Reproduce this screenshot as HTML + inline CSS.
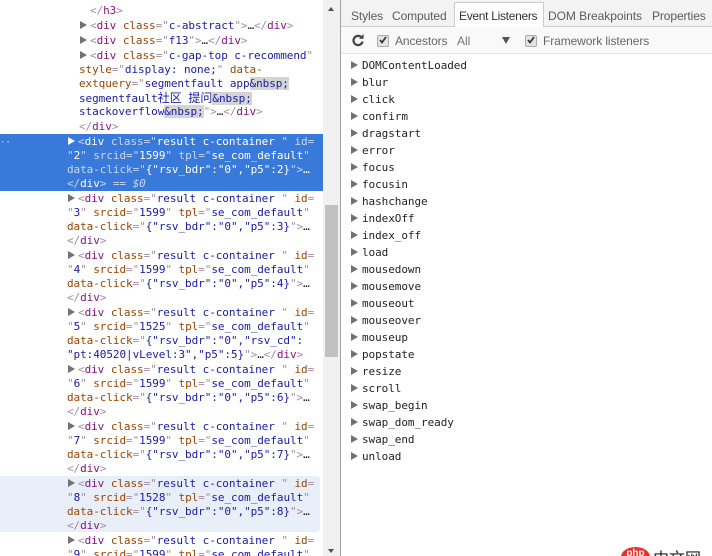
<!DOCTYPE html>
<html><head><meta charset="utf-8">
<style>
html,body{margin:0;padding:0;background:#fff;width:712px;height:556px;overflow:hidden}
#r{position:relative;width:712px;height:556px;overflow:hidden}
.a{position:absolute}
.l{position:absolute;margin-top:1px;white-space:pre;font:11px/14px "DejaVu Sans Mono",monospace;letter-spacing:-.065px;color:#222;height:14px}
.t{color:#881280}.b{color:#a58aa3}.n{color:#994500}.v{color:#1a1aa6}.g{background:#d4d4d4}
.c{font:12px/14px "WenQuanYi Zen Hei","Noto Sans CJK SC",sans-serif;letter-spacing:0;word-spacing:4px}
.s,.s span{color:#fff}.s .b,.s .n{color:#c9d8f2}
.tri{position:absolute;margin-top:1px;width:0;height:0;border-left:7px solid #727272;border-top:4px solid transparent;border-bottom:4px solid transparent}
.tab{position:absolute;top:8px;font:12px/16px "Liberation Sans",sans-serif;color:#5a5a5a;white-space:pre}
.ev{position:absolute;left:362px;margin-top:1px;white-space:pre;font:11px/14px "DejaVu Sans Mono",monospace;letter-spacing:-.065px;color:#222}
.ck{position:absolute;width:10px;height:10px;background:#e4e4e4;border:1px solid #aaa;border-radius:2px}
</style></head><body><div id="r">

<div class="a" style="left:0;top:134px;width:323px;height:57px;background:#3879d9"></div>
<div class="a" style="left:0;top:476px;width:320px;height:56px;background:#e8eff9;border-radius:0 4px 4px 0"></div>

<div class="l" style="left:90px;top:3px"><span class="b">&lt;/</span><span class="t">h3</span><span class="b">&gt;</span></div>
<div class="tri" style="left:80px;top:20px"></div>
<div class="l" style="left:90px;top:18px"><span class="b">&lt;</span><span class="t">div</span> <span class="n">class</span><span class="b">="</span><span class="v">c-abstract</span><span class="b">"&gt;</span>…<span class="b">&lt;/</span><span class="t">div</span><span class="b">&gt;</span></div>
<div class="tri" style="left:80px;top:35px"></div>
<div class="l" style="left:90px;top:33px"><span class="b">&lt;</span><span class="t">div</span> <span class="n">class</span><span class="b">="</span><span class="v">f13</span><span class="b">"&gt;</span>…<span class="b">&lt;/</span><span class="t">div</span><span class="b">&gt;</span></div>
<div class="tri" style="left:80px;top:50px"></div>
<div class="l" style="left:90px;top:48px"><span class="b">&lt;</span><span class="t">div</span> <span class="n">class</span><span class="b">="</span><span class="v">c-gap-top c-recommend</span><span class="b">"</span></div>
<div class="l" style="left:79px;top:62px"><span class="n">style</span><span class="b">="</span><span class="v">display: none;</span><span class="b">"</span> <span class="n">data-</span></div>
<div class="l" style="left:79px;top:76px"><span class="n">extquery</span><span class="b">="</span><span class="v">segmentfault app</span><span class="v g">&amp;nbsp;</span></div>
<div class="l" style="left:79px;top:90px"><span class="v">segmentfault</span><span class="v c">社区 提问</span><span class="v g">&amp;nbsp;</span></div>
<div class="l" style="left:79px;top:104px"><span class="v">stackoverflow</span><span class="v g">&amp;nbsp;</span><span class="b">"&gt;</span>…<span class="b">&lt;/</span><span class="t">div</span><span class="b">&gt;</span></div>
<div class="l" style="left:79px;top:119px"><span class="b">&lt;/</span><span class="t">div</span><span class="b">&gt;</span></div>

<div class="a" style="left:0;top:140px;color:#dfe8f8;font:9px/6px 'DejaVu Sans Mono',monospace">··</div>
<div class="tri" style="left:68px;top:136px;border-left-color:#fff"></div>
<div class="l s" style="left:78px;top:134px"><span class="b">&lt;</span><span>div</span> <span class="n">class</span><span class="b">="</span><span>result c-container </span><span class="b">"</span> <span class="n">id</span><span class="b">=</span></div>
<div class="l s" style="left:67px;top:148px"><span class="b">"</span>2<span class="b">"</span> <span class="n">srcid</span><span class="b">="</span>1599<span class="b">"</span> <span class="n">tpl</span><span class="b">="</span>se_com_default<span class="b">"</span></div>
<div class="l s" style="left:67px;top:162px"><span class="n">data-click</span><span class="b">="</span>{"rsv_bdr":"0","p5":2}<span class="b">"&gt;</span>…</div>
<div class="l s" style="left:67px;top:176px"><span class="b">&lt;/</span><span>div</span><span class="b">&gt;</span> <span class="b">== <i>$0</i></span></div>

<div class="tri" style="left:68px;top:193px"></div>
<div class="l" style="left:78px;top:191px"><span class="b">&lt;</span><span class="t">div</span> <span class="n">class</span><span class="b">="</span><span class="v">result c-container </span><span class="b">"</span> <span class="n">id</span><span class="b">=</span></div>
<div class="l" style="left:67px;top:205px"><span class="b">"</span><span class="v">3</span><span class="b">"</span> <span class="n">srcid</span><span class="b">="</span><span class="v">1599</span><span class="b">"</span> <span class="n">tpl</span><span class="b">="</span><span class="v">se_com_default</span><span class="b">"</span></div>
<div class="l" style="left:67px;top:219px"><span class="n">data-click</span><span class="b">="</span><span class="v">{"rsv_bdr":"0","p5":3}</span><span class="b">"&gt;</span>…</div>
<div class="l" style="left:67px;top:233px"><span class="b">&lt;/</span><span class="t">div</span><span class="b">&gt;</span></div>

<div class="tri" style="left:68px;top:250px"></div>
<div class="l" style="left:78px;top:248px"><span class="b">&lt;</span><span class="t">div</span> <span class="n">class</span><span class="b">="</span><span class="v">result c-container </span><span class="b">"</span> <span class="n">id</span><span class="b">=</span></div>
<div class="l" style="left:67px;top:262px"><span class="b">"</span><span class="v">4</span><span class="b">"</span> <span class="n">srcid</span><span class="b">="</span><span class="v">1599</span><span class="b">"</span> <span class="n">tpl</span><span class="b">="</span><span class="v">se_com_default</span><span class="b">"</span></div>
<div class="l" style="left:67px;top:276px"><span class="n">data-click</span><span class="b">="</span><span class="v">{"rsv_bdr":"0","p5":4}</span><span class="b">"&gt;</span>…</div>
<div class="l" style="left:67px;top:290px"><span class="b">&lt;/</span><span class="t">div</span><span class="b">&gt;</span></div>

<div class="tri" style="left:68px;top:307px"></div>
<div class="l" style="left:78px;top:305px"><span class="b">&lt;</span><span class="t">div</span> <span class="n">class</span><span class="b">="</span><span class="v">result c-container </span><span class="b">"</span> <span class="n">id</span><span class="b">=</span></div>
<div class="l" style="left:67px;top:319px"><span class="b">"</span><span class="v">5</span><span class="b">"</span> <span class="n">srcid</span><span class="b">="</span><span class="v">1525</span><span class="b">"</span> <span class="n">tpl</span><span class="b">="</span><span class="v">se_com_default</span><span class="b">"</span></div>
<div class="l" style="left:67px;top:333px"><span class="n">data-click</span><span class="b">="</span><span class="v">{"rsv_bdr":"0","rsv_cd":</span></div>
<div class="l" style="left:67px;top:347px"><span class="v">"pt:40520|vLevel:3","p5":5}</span><span class="b">"&gt;</span>…<span class="b">&lt;/</span><span class="t">div</span><span class="b">&gt;</span></div>

<div class="tri" style="left:68px;top:364px"></div>
<div class="l" style="left:78px;top:362px"><span class="b">&lt;</span><span class="t">div</span> <span class="n">class</span><span class="b">="</span><span class="v">result c-container </span><span class="b">"</span> <span class="n">id</span><span class="b">=</span></div>
<div class="l" style="left:67px;top:376px"><span class="b">"</span><span class="v">6</span><span class="b">"</span> <span class="n">srcid</span><span class="b">="</span><span class="v">1599</span><span class="b">"</span> <span class="n">tpl</span><span class="b">="</span><span class="v">se_com_default</span><span class="b">"</span></div>
<div class="l" style="left:67px;top:390px"><span class="n">data-click</span><span class="b">="</span><span class="v">{"rsv_bdr":"0","p5":6}</span><span class="b">"&gt;</span>…</div>
<div class="l" style="left:67px;top:404px"><span class="b">&lt;/</span><span class="t">div</span><span class="b">&gt;</span></div>

<div class="tri" style="left:68px;top:421px"></div>
<div class="l" style="left:78px;top:419px"><span class="b">&lt;</span><span class="t">div</span> <span class="n">class</span><span class="b">="</span><span class="v">result c-container </span><span class="b">"</span> <span class="n">id</span><span class="b">=</span></div>
<div class="l" style="left:67px;top:433px"><span class="b">"</span><span class="v">7</span><span class="b">"</span> <span class="n">srcid</span><span class="b">="</span><span class="v">1599</span><span class="b">"</span> <span class="n">tpl</span><span class="b">="</span><span class="v">se_com_default</span><span class="b">"</span></div>
<div class="l" style="left:67px;top:447px"><span class="n">data-click</span><span class="b">="</span><span class="v">{"rsv_bdr":"0","p5":7}</span><span class="b">"&gt;</span>…</div>
<div class="l" style="left:67px;top:461px"><span class="b">&lt;/</span><span class="t">div</span><span class="b">&gt;</span></div>

<div class="tri" style="left:68px;top:478px"></div>
<div class="l" style="left:78px;top:476px"><span class="b">&lt;</span><span class="t">div</span> <span class="n">class</span><span class="b">="</span><span class="v">result c-container </span><span class="b">"</span> <span class="n">id</span><span class="b">=</span></div>
<div class="l" style="left:67px;top:490px"><span class="b">"</span><span class="v">8</span><span class="b">"</span> <span class="n">srcid</span><span class="b">="</span><span class="v">1528</span><span class="b">"</span> <span class="n">tpl</span><span class="b">="</span><span class="v">se_com_default</span><span class="b">"</span></div>
<div class="l" style="left:67px;top:504px"><span class="n">data-click</span><span class="b">="</span><span class="v">{"rsv_bdr":"0","p5":8}</span><span class="b">"&gt;</span>…</div>
<div class="l" style="left:67px;top:518px"><span class="b">&lt;/</span><span class="t">div</span><span class="b">&gt;</span></div>

<div class="tri" style="left:68px;top:535px"></div>
<div class="l" style="left:78px;top:533px"><span class="b">&lt;</span><span class="t">div</span> <span class="n">class</span><span class="b">="</span><span class="v">result c-container </span><span class="b">"</span> <span class="n">id</span><span class="b">=</span></div>
<div class="l" style="left:67px;top:547px"><span class="b">"</span><span class="v">9</span><span class="b">"</span> <span class="n">srcid</span><span class="b">="</span><span class="v">1599</span><span class="b">"</span> <span class="n">tpl</span><span class="b">="</span><span class="v">se_com_default</span><span class="b">"</span></div>

<!-- scrollbar -->
<div class="a" style="left:323px;top:0;width:17px;height:556px;background:#f1f1f1"></div>
<div class="a" style="left:325px;top:205px;width:13px;height:152px;background:#c1c1c1"></div>
<div class="a" style="left:328px;top:7px;width:0;height:0;border-left:3.5px solid transparent;border-right:3.5px solid transparent;border-bottom:4px solid #505050"></div>
<div class="a" style="left:328px;top:549px;width:0;height:0;border-left:3.5px solid transparent;border-right:3.5px solid transparent;border-top:4px solid #505050"></div>
<div class="a" style="left:340px;top:0;width:1px;height:556px;background:#a3a3a3"></div>

<!-- tabs -->
<div class="a" style="left:341px;top:0;width:371px;height:26px;background:#f3f3f3;border-bottom:1px solid #ccc"></div>
<div class="a" style="left:454px;top:2px;width:88px;height:25px;background:#fff;border:1px solid #ccc;border-bottom:none"></div>
<div class="tab" style="left:351px;letter-spacing:-.1px">Styles</div>
<div class="tab" style="left:392px;letter-spacing:-.1px">Computed</div>
<div class="tab" style="left:459px;color:#333;letter-spacing:-.3px">Event Listeners</div>
<div class="tab" style="left:548px;letter-spacing:-.05px">DOM Breakpoints</div>
<div class="tab" style="left:652px;letter-spacing:-.1px">Properties</div>

<!-- toolbar -->
<div class="a" style="left:341px;top:27px;width:371px;height:26px;background:#f9f9f9;border-bottom:1px solid #e4e4e4"></div>
<svg class="a" style="left:351px;top:33px" width="15" height="15" viewBox="0 0 15 15"><path d="M10.6 4.5A4.6 4.6 0 1 0 11.6 8.5" fill="none" stroke="#444" stroke-width="2.2"/><path d="M8 5.8h4.6V1z" fill="#444"/></svg>
<div class="ck" style="left:377px;top:35px"></div>
<svg class="a" style="left:377px;top:34px" width="12" height="12" viewBox="0 0 12 12"><path d="M3 6l2 2.5 4-5.5" fill="none" stroke="#333" stroke-width="1.7"/></svg>
<div class="tab" style="left:395px;top:33px;letter-spacing:-.1px;color:#666">Ancestors</div>
<div class="tab" style="left:457px;top:33px;color:#777">All</div>
<div class="a" style="left:502px;top:37px;width:0;height:0;border-left:4px solid transparent;border-right:4px solid transparent;border-top:7px solid #555"></div>
<div class="ck" style="left:525px;top:35px"></div>
<svg class="a" style="left:525px;top:34px" width="12" height="12" viewBox="0 0 12 12"><path d="M3 6l2 2.5 4-5.5" fill="none" stroke="#333" stroke-width="1.7"/></svg>
<div class="tab" style="left:543px;top:33px;letter-spacing:-.1px;color:#666">Framework listeners</div>

<!-- events -->
<div class="tri" style="left:351px;top:60px"></div><div class="ev" style="top:58px">DOMContentLoaded</div>
<div class="tri" style="left:351px;top:77px"></div><div class="ev" style="top:75px">blur</div>
<div class="tri" style="left:351px;top:94px"></div><div class="ev" style="top:92px">click</div>
<div class="tri" style="left:351px;top:111px"></div><div class="ev" style="top:109px">confirm</div>
<div class="tri" style="left:351px;top:128px"></div><div class="ev" style="top:126px">dragstart</div>
<div class="tri" style="left:351px;top:145px"></div><div class="ev" style="top:143px">error</div>
<div class="tri" style="left:351px;top:162px"></div><div class="ev" style="top:160px">focus</div>
<div class="tri" style="left:351px;top:179px"></div><div class="ev" style="top:177px">focusin</div>
<div class="tri" style="left:351px;top:196px"></div><div class="ev" style="top:194px">hashchange</div>
<div class="tri" style="left:351px;top:213px"></div><div class="ev" style="top:211px">indexOff</div>
<div class="tri" style="left:351px;top:230px"></div><div class="ev" style="top:228px">index_off</div>
<div class="tri" style="left:351px;top:247px"></div><div class="ev" style="top:245px">load</div>
<div class="tri" style="left:351px;top:264px"></div><div class="ev" style="top:262px">mousedown</div>
<div class="tri" style="left:351px;top:281px"></div><div class="ev" style="top:279px">mousemove</div>
<div class="tri" style="left:351px;top:298px"></div><div class="ev" style="top:296px">mouseout</div>
<div class="tri" style="left:351px;top:315px"></div><div class="ev" style="top:313px">mouseover</div>
<div class="tri" style="left:351px;top:332px"></div><div class="ev" style="top:330px">mouseup</div>
<div class="tri" style="left:351px;top:349px"></div><div class="ev" style="top:347px">popstate</div>
<div class="tri" style="left:351px;top:366px"></div><div class="ev" style="top:364px">resize</div>
<div class="tri" style="left:351px;top:383px"></div><div class="ev" style="top:381px">scroll</div>
<div class="tri" style="left:351px;top:400px"></div><div class="ev" style="top:398px">swap_begin</div>
<div class="tri" style="left:351px;top:417px"></div><div class="ev" style="top:415px">swap_dom_ready</div>
<div class="tri" style="left:351px;top:434px"></div><div class="ev" style="top:432px">swap_end</div>
<div class="tri" style="left:351px;top:451px"></div><div class="ev" style="top:449px">unload</div>

<!-- watermark -->
<div class="a" style="left:621px;top:547px;width:29px;height:20px;background:#e8312f;border-radius:50%;color:#fff;font:bold 10px/14px 'Liberation Sans',sans-serif;text-align:center">php</div>
<div class="a" style="left:653px;top:547px;font:16px/20px 'Noto Sans CJK SC',sans-serif;color:#222;white-space:pre">中文网</div>
</div></body></html>
